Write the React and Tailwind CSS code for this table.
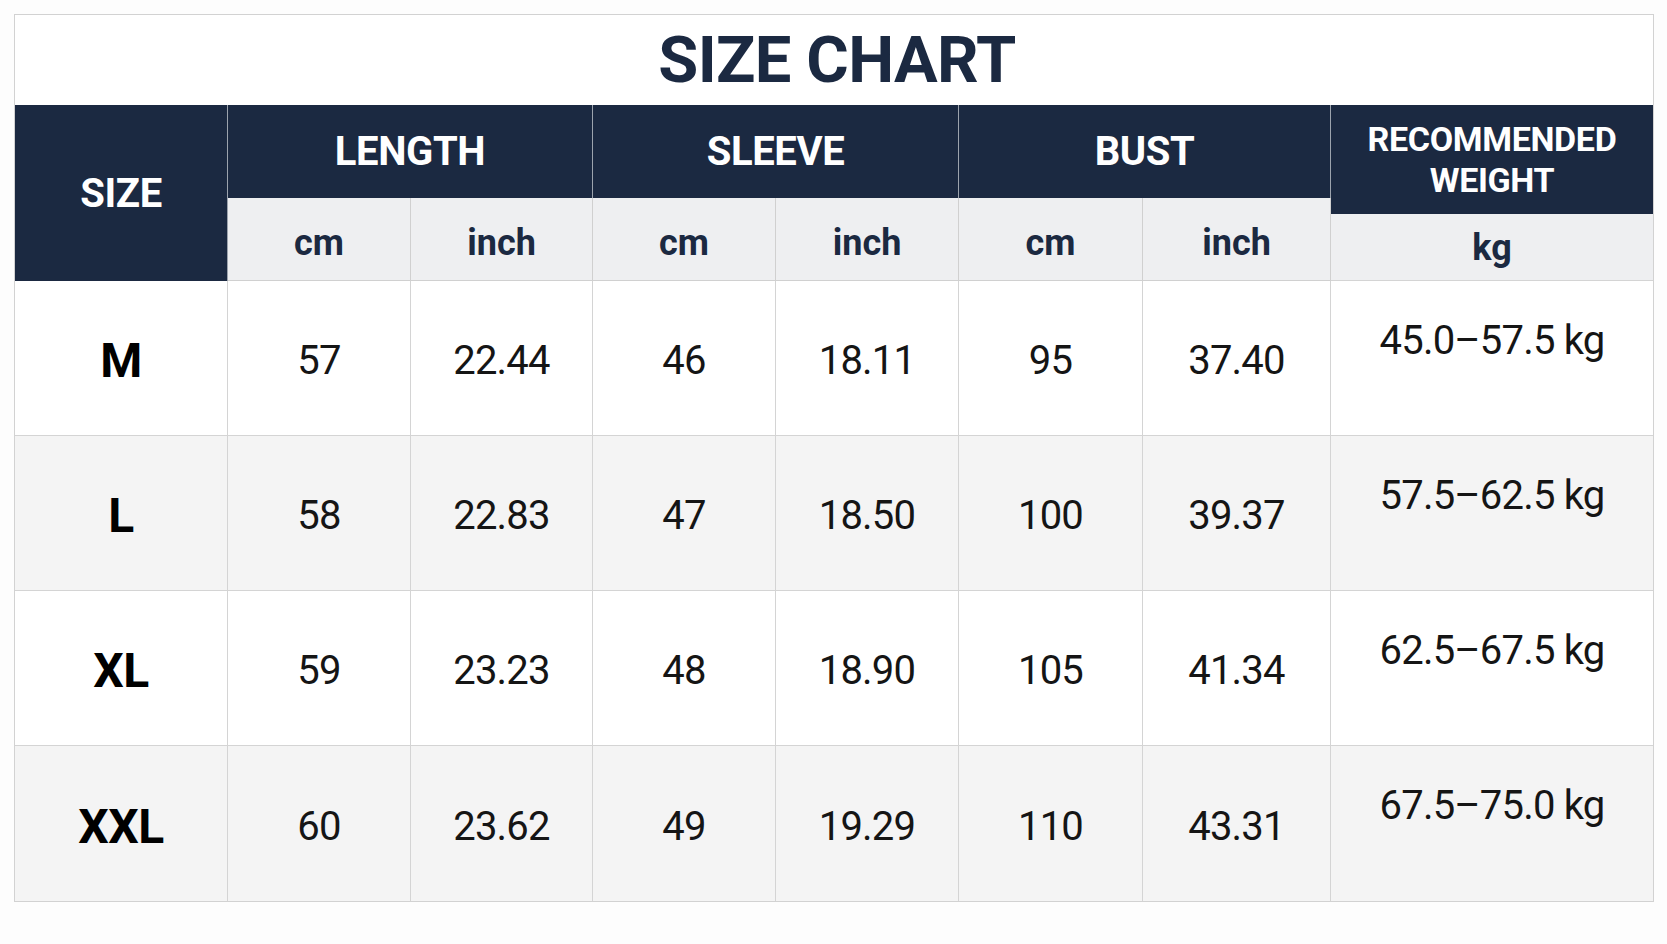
import React from "react";

const rows = [
  { size: "M", len: ["57", "22.44"], sleeve: ["46", "18.11"], bust: ["95", "37.40"], weight: "45.0–57.5 kg" },
  { size: "L", len: ["58", "22.83"], sleeve: ["47", "18.50"], bust: ["100", "39.37"], weight: "57.5–62.5 kg" },
  { size: "XL", len: ["59", "23.23"], sleeve: ["48", "18.90"], bust: ["105", "41.34"], weight: "62.5–67.5 kg" },
  { size: "XXL", len: ["60", "23.62"], sleeve: ["49", "19.29"], bust: ["110", "43.31"], weight: "67.5–75.0 kg" },
];

const groups = ["LENGTH", "SLEEVE", "BUST"];

export default function App() {
  return (
    <div className="min-h-screen w-full bg-[#fdfdfd] pt-[14px] pl-[14px]" style={{ fontFamily: "Roboto, 'Liberation Sans', sans-serif" }}>
      <div className="w-[1640px] border border-[#d2d2d2] bg-white">
        {/* Title */}
        <div className="h-[90px] flex items-center justify-center">
          <h1 className="text-[65px] font-bold text-[#1b2941] tracking-[-0.01em] leading-none pl-[6px]">SIZE CHART</h1>
        </div>

        {/* Table */}
        <div className="grid grid-cols-[213px_183px_182px_183px_183px_184px_188px_1fr] grid-rows-[93px_83px_155px_155px_155px_155px]">
          {/* Header */}
          <div className="row-span-2 bg-[#1b2941] flex items-center justify-center pt-[2px] border-r border-[#9ca3ad]">
            <span className="text-white text-[40px] font-bold tracking-[-0.01em]">SIZE</span>
          </div>
          {groups.map((g) => (
            <div key={g} className="col-span-2 bg-[#1b2941] flex items-center justify-center border-r border-[#9ca3ad]">
              <span className="text-white text-[40px] font-bold tracking-[-0.01em]">{g}</span>
            </div>
          ))}
          <div className="row-span-2 flex flex-col">
            <div className="h-[109px] bg-[#1b2941] flex flex-col items-center justify-center">
              <span className="text-white text-[34px] font-bold leading-[41px] tracking-[-0.01em]">RECOMMENDED</span>
              <span className="text-white text-[34px] font-bold leading-[41px] tracking-[-0.01em]">WEIGHT</span>
            </div>
            <div className="flex-1 bg-[#eeeff1] flex items-center justify-center pt-[2px] border-b border-[#d4d4d4]">
              <span className="text-[#1b2941] text-[36px] font-bold">kg</span>
            </div>
          </div>
          {groups.map((g) => (
            <React.Fragment key={g + "-units"}>
              <div className="bg-[#eeeff1] flex items-center justify-center pt-[8px] border-r border-b border-[#d0d0d0]">
                <span className="text-[#1b2941] text-[36px] font-bold">cm</span>
              </div>
              <div className="bg-[#eeeff1] flex items-center justify-center pt-[8px] border-r border-b border-[#d0d0d0]">
                <span className="text-[#1b2941] text-[36px] font-bold">inch</span>
              </div>
            </React.Fragment>
          ))}

          {/* Body */}
          {rows.map((r, i) => {
            const bg = i % 2 === 1 ? "bg-[#f4f4f4]" : "bg-white";
            const last = i === rows.length - 1;
            const cell = `${bg} flex items-center justify-center pt-[6px] border-r border-[#d4d4d4] ${last ? "" : "border-b"}`;
            const values = [...r.len, ...r.sleeve, ...r.bust];
            return (
              <React.Fragment key={r.size}>
                <div className={cell}>
                  <span className="text-black text-[48px] font-bold tracking-[-0.01em]">{r.size}</span>
                </div>
                {values.map((v, j) => (
                  <div key={j} className={cell}>
                    <span className="text-[#151515] text-[40px] tracking-[-0.02em]">{v}</span>
                  </div>
                ))}
                <div className={`${bg} flex items-start justify-center pt-[37px] ${last ? "" : "border-b border-[#d4d4d4]"}`}>
                  <span className="text-[#151515] text-[40px] leading-[46px] tracking-[-0.02em]">{r.weight}</span>
                </div>
              </React.Fragment>
            );
          })}
        </div>
      </div>
    </div>
  );
}
